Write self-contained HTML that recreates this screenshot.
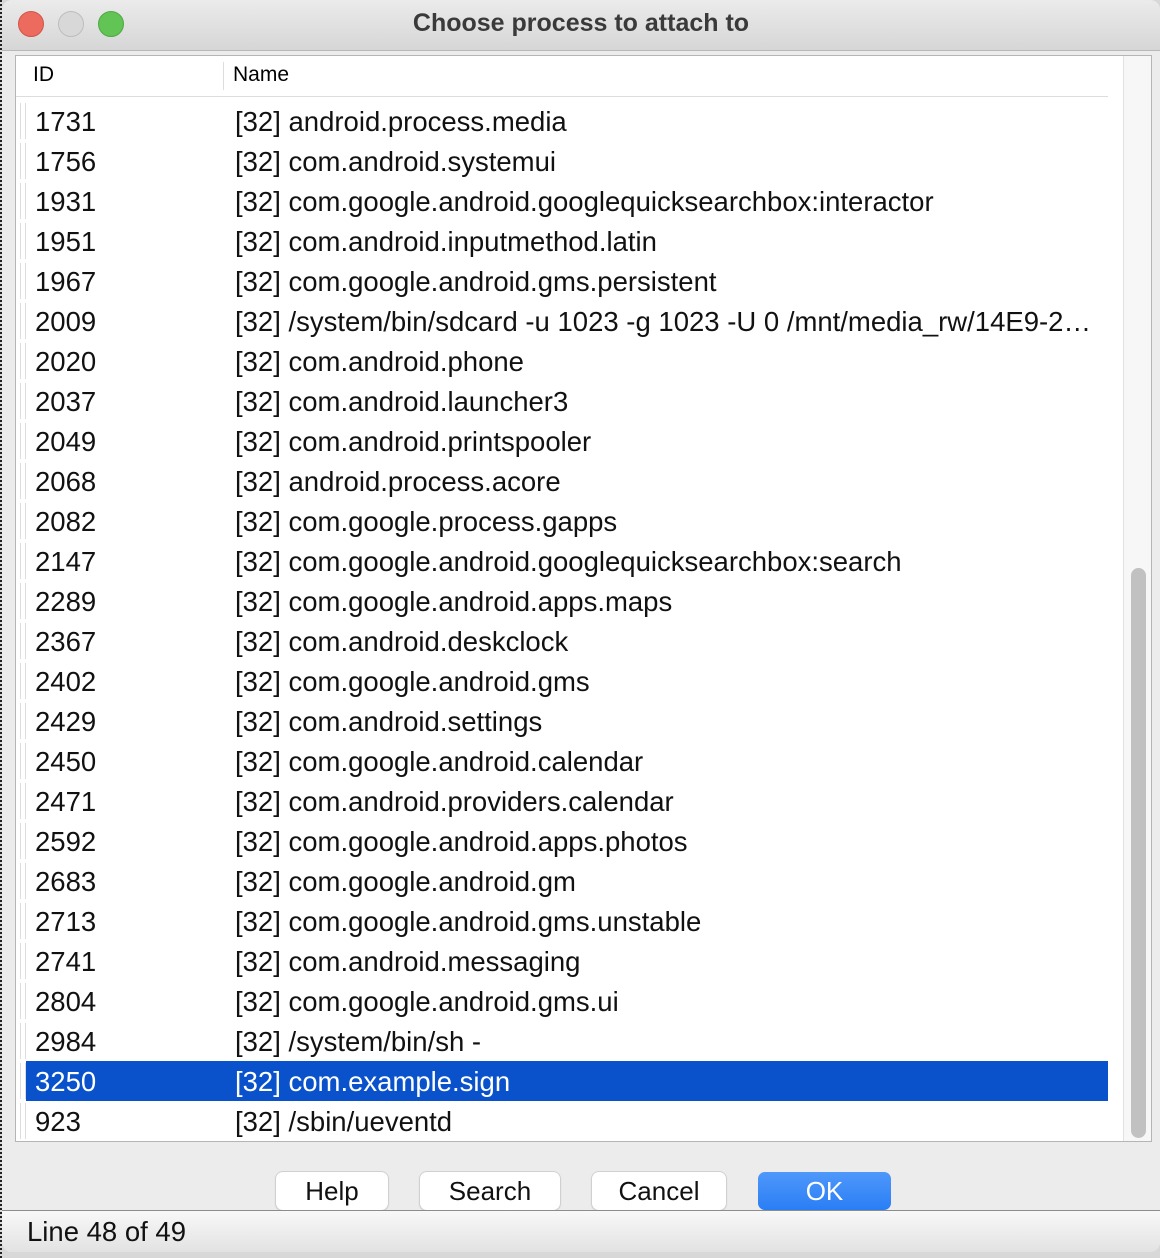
<!DOCTYPE html><html><head><style>
body{margin:0;width:1160px;height:1258px;background:#d8d8d8;font-family:"Liberation Sans",Arial,sans-serif;position:relative;overflow:hidden}
.win{position:absolute;left:2px;top:0;width:1158px;height:1252px;background:#ececec;border-radius:10px;overflow:hidden}
.title{position:absolute;left:0;top:0;width:100%;height:50px;background:linear-gradient(#ebebeb,#d6d6d6);border-bottom:1px solid #b8b8b8;text-align:center;line-height:46px;font-size:25px;font-weight:bold;color:#3a3a3a}
.dot{position:absolute;top:11px;width:24px;height:24px;border-radius:50%}
.tbl{position:absolute;left:13px;top:55px;width:1135px;height:1085px;background:#fff;border:1px solid #b5b5b5;overflow:hidden}
.hdr{position:absolute;left:0;top:0;width:1092px;height:40px;border-bottom:1px solid #ddd;font-size:21px;line-height:38px}
.row{position:absolute;left:0;height:40px;width:1092px;font-size:27.5px;line-height:42px;color:#111}
.row .g{position:absolute;left:4px;top:2px;width:4px;height:36px;border-left:1px solid #ddd;border-right:1px solid #ddd}
.row .id{position:absolute;left:19px}
.row .nm{position:absolute;left:219px;white-space:nowrap}
.sel{background:#0a52cc;color:#fff;}
.sb{position:absolute;left:1107px;top:0;width:28px;height:1085px;background:#f7f7f7;border-left:1px solid #e2e2e2}
.thumb{position:absolute;left:7px;top:512px;width:15px;height:570px;background:#c1c1c1;border-radius:8px}
.btn{position:absolute;top:1172px;height:38px;background:#fff;border-radius:7px;box-shadow:0 0 0 1px #d0d0d0,0 1px 2px rgba(0,0,0,.2);font-size:26px;text-align:center;line-height:38px;color:#111}
.status{position:absolute;left:0;top:1210px;width:100%;height:42px;border-top:1px solid #8c8c8c;background:linear-gradient(#f8f8f8,#e2e2e2);font-size:27.5px;line-height:42px;padding-left:25px;color:#111}
</style></head><body>
<div class="win">
<div class="title">Choose process to attach to
<div class="dot" style="left:16px;background:#ed6a5e;border:1px solid #d05548"></div>
<div class="dot" style="left:56px;background:#d8d8d8;border:1px solid #bdbdbd"></div>
<div class="dot" style="left:96px;background:#61c454;border:1px solid #4ea943"></div>
</div>
<div class="tbl">
<div class="hdr"><span style="position:absolute;left:17px">ID</span><span style="position:absolute;left:207px;top:6px;height:28px;border-left:1px solid #ddd"></span><span style="position:absolute;left:217px">Name</span></div>
<div id="rows"></div>
<div class="sb"><div class="thumb"></div></div>
</div>
<div class="btn" style="left:274px;width:112px">Help</div>
<div class="btn" style="left:418px;width:140px">Search</div>
<div class="btn" style="left:590px;width:134px">Cancel</div>
<div class="btn" style="left:756px;width:133px;background:linear-gradient(#4f98fb,#2a7ef5);color:#fff;box-shadow:none">OK</div>
<div class="status">Line 48 of 49</div>
</div>
<div style="position:absolute;left:0;top:0;width:2px;height:1258px;border-left:2px dotted #222"></div>
<script>
var d=[["1731","android.process.media"],["1756","com.android.systemui"],["1931","com.google.android.googlequicksearchbox:interactor"],["1951","com.android.inputmethod.latin"],["1967","com.google.android.gms.persistent"],["2009","/system/bin/sdcard -u 1023 -g 1023 -U 0 /mnt/media_rw/14E9-2…"],["2020","com.android.phone"],["2037","com.android.launcher3"],["2049","com.android.printspooler"],["2068","android.process.acore"],["2082","com.google.process.gapps"],["2147","com.google.android.googlequicksearchbox:search"],["2289","com.google.android.apps.maps"],["2367","com.android.deskclock"],["2402","com.google.android.gms"],["2429","com.android.settings"],["2450","com.google.android.calendar"],["2471","com.android.providers.calendar"],["2592","com.google.android.apps.photos"],["2683","com.google.android.gm"],["2713","com.google.android.gms.unstable"],["2741","com.android.messaging"],["2804","com.google.android.gms.ui"],["2984","/system/bin/sh -"],["3250","com.example.sign"],["923","/sbin/ueventd"]];
var h="";d.forEach(function(r,i){var t=45+i*40;var s=i==24;h+='<div class="row'+'" style="top:'+t+'px"><div class="g"></div>'+(s?'<div class="sel" style="position:absolute;left:10px;top:0;width:1082px;height:40px"></div>':'')+'<span class="id" style="'+(s?'color:#fff':'')+'">'+r[0]+'</span><span class="nm" style="'+(s?'color:#fff':'')+'">[32] '+r[1]+'</span></div>';});
document.getElementById("rows").innerHTML=h;
</script>
</body></html>
